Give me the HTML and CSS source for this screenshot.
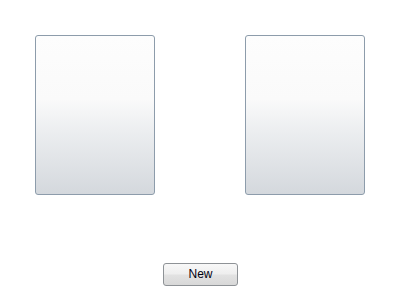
FILE: index.html
```html
<!DOCTYPE html>
<html>
<head>
<meta charset="utf-8">
<link rel="stylesheet" href="styles.css">
</head>
<body>
<div class="page">
  <div class="cards">
    <div class="card"></div>
    <div class="card"></div>
  </div>
  <div class="actions">
    <button class="btn">New</button>
  </div>
</div>
</body>
</html>
```

FILE: styles.css
```css
html, body {
  margin: 0;
  padding: 0;
  background: #ffffff;
  width: 400px;
  height: 300px;
  overflow: hidden;
}
.page {
  display: flex;
  flex-direction: column;
  padding: 35px 0 0 35px;
}
.cards {
  display: flex;
  gap: 90px;
}
.card {
  box-sizing: border-box;
  width: 120px;
  height: 160px;
  border: 1px solid #8d9cab;
  border-radius: 3px;
  background: linear-gradient(to bottom, #fdfdfd 0%, #fafafa 40%, #eceef0 60%, #d4d8dd 100%);
}
.actions {
  display: flex;
  justify-content: flex-start;
  padding: 68px 0 0 128px;
}
.btn {
  box-sizing: border-box;
  width: 75px;
  height: 23px;
  margin: 0;
  padding: 0;
  border: 1px solid #8e9296;
  border-radius: 3px;
  background: linear-gradient(to bottom, #f8f8f8 0%, #eeeeee 48%, #e2e2e2 52%, #d8d8d8 100%);
  font-family: "Liberation Sans", Arial, sans-serif;
  font-size: 12px;
  font-weight: normal;
  color: #000010;
  line-height: 21px;
  text-align: center;
}
```
